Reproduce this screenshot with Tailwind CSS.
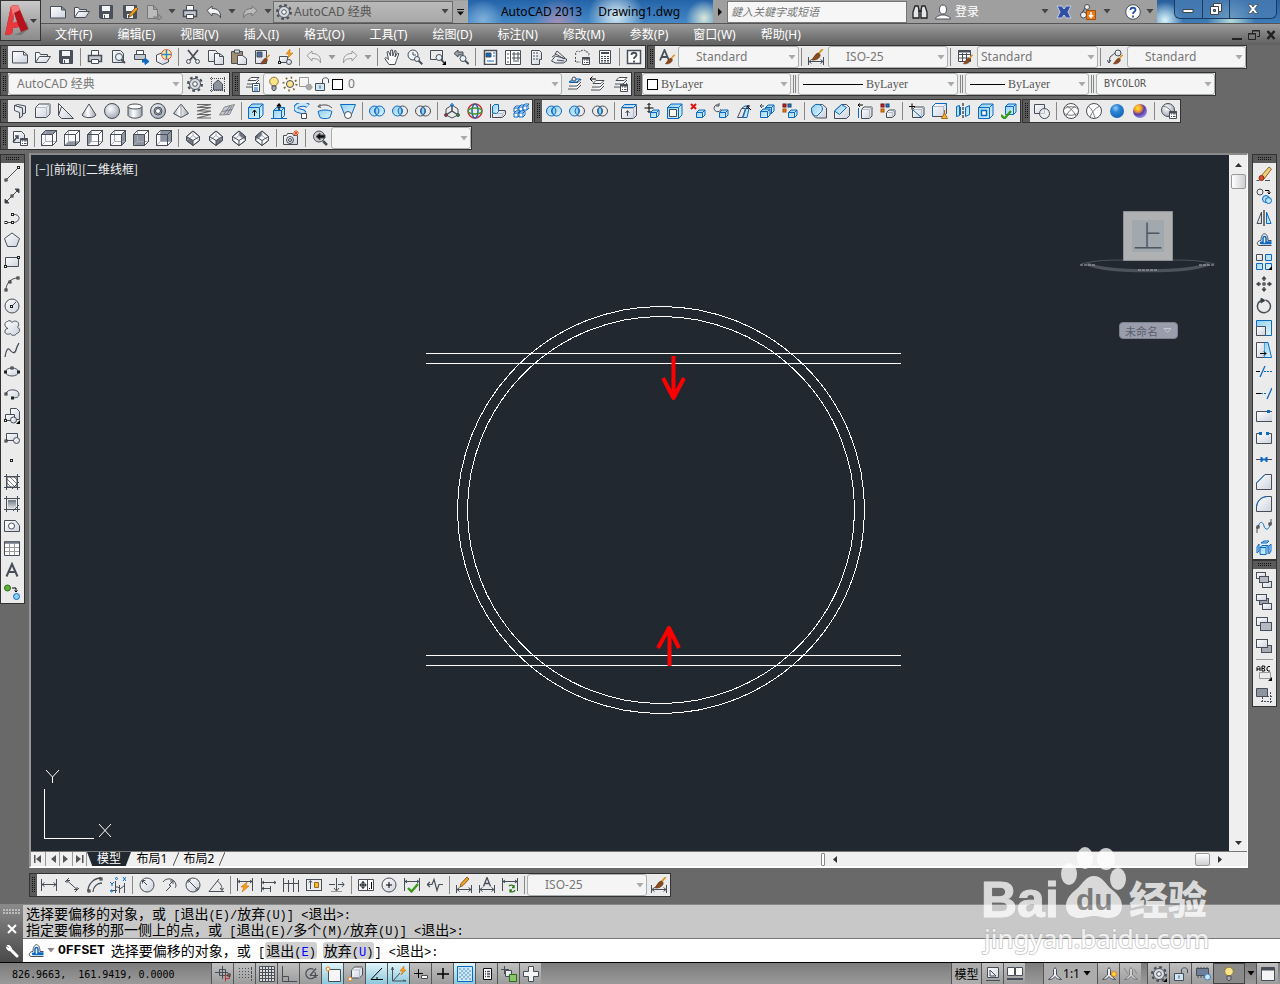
<!DOCTYPE html>
<html lang="zh-CN">
<head>
<meta charset="utf-8">
<title>AutoCAD 2013 Drawing1.dwg</title>
<script src="https://cdn.jsdelivr.net/npm/@tailwindcss/browser@4"></script>
</head>
<body class="relative flex h-screen min-h-[700px] flex-col overflow-hidden bg-[#696969] font-['Noto_Sans','Noto_Sans_CJK_SC',sans-serif] text-[12px] leading-4 text-black">

<svg class="absolute h-0 w-0" aria-hidden="true">
  <defs>
    <linearGradient id="g" x1="0" y1="0" x2="1" y2="1"><stop offset="0" stop-color="#fff"/><stop offset="1" stop-color="#cdd2de"/></linearGradient>
    <linearGradient id="b" x1="0" y1="0" x2="1" y2="1"><stop offset="0" stop-color="#8fd0f0"/><stop offset="1" stop-color="#e3f4fc"/></linearGradient>
    <linearGradient id="k" x1="0" y1="0" x2="0" y2="1"><stop offset="0" stop-color="#6f7681"/><stop offset="1" stop-color="#e6e8ec"/></linearGradient>
    <linearGradient id="m" x1="0" y1="0" x2="1" y2="0"><stop offset="0" stop-color="#aab0bb"/><stop offset=".4" stop-color="#fff"/><stop offset="1" stop-color="#9ba2ae"/></linearGradient>
    <radialGradient id="s" cx=".4" cy=".35" r=".65"><stop offset="0" stop-color="#fff"/><stop offset="1" stop-color="#a4abb9"/></radialGradient>
    <radialGradient id="sb" cx=".4" cy=".3" r=".7"><stop offset="0" stop-color="#8fd0ff"/><stop offset=".4" stop-color="#2f86d6"/><stop offset="1" stop-color="#1765b4"/></radialGradient>
    <radialGradient id="so" cx=".35" cy=".3" r=".7"><stop offset="0" stop-color="#ffe83a"/><stop offset=".35" stop-color="#f39a2a"/><stop offset=".65" stop-color="#5a3ba8"/><stop offset="1" stop-color="#8a86e0"/></radialGradient>
  </defs>
</svg>

<header class="flex h-[45px] shrink-0">
  <button aria-label="应用程序菜单" class="flex h-[41px] w-[41px] shrink-0 items-center border border-[#333] bg-linear-to-b from-[#c9c9c9] to-[#8b8b8b]">
    <svg width="39" height="38" viewBox="0 0 39 38"><path d="M5 33C14 34 24 31 25 19l3 8-8 6z" fill="#777"/><path fill="#b5121b" fill-rule="evenodd" d="M4 33 10 4l7-1 10 24-7 3-2-5-6 1-1 6zM13 11l3 9-4 1z"/><path fill="#e8383d" d="M4 33 10 4l4-1-1 8-1 10 4-1 2 5-6 1-1 6z"/><path fill="#f0777a" d="m10 4 7-1 2 5-6 3-1 4z"/><path fill="#3a3f46" d="M29 17h7l-3.500 4z"/></svg>
  </button>
  <div class="flex min-w-0 flex-1 flex-col">
    <div class="flex h-[24px] items-center border-b border-[#555] bg-[#9f9f9f]">
      <div class="flex w-[232px] shrink-0 items-center pl-[5px]" data-tools="new open save saveas export v print undo v redo v" data-kind="q"></div>
      <div class="flex h-[22px] w-[180px] shrink-0 items-center border border-[#6d6d6d] bg-linear-to-b from-[#b9b9b9] to-[#a9a9a9] pl-[2px]">
        <span data-icon="gear"></span>
        <select aria-label="工作空间" class="min-w-0 flex-1 appearance-none pl-[2px] text-[12px] text-[#555] outline-none"><option>AutoCAD 经典</option></select>
        <span data-caret="dark"></span>
      </div>
      <button aria-label="自定义快速访问工具栏" class="flex h-[22px] w-[15px] shrink-0 items-center justify-center bg-[#a9a9a9]"><svg width="9" height="8"><path d="M1 1.500h7" stroke="#111"/><path d="M1 3.500h7l-3.500 4z" fill="#111"/></svg></button>
      <div class="flex h-full w-[245px] shrink-0 items-center justify-center gap-4 bg-[radial-gradient(circle_at_15px_20px,#7fb0d8,transparent_20px),radial-gradient(circle_at_90px_24px,#a58fb8,transparent_26px),radial-gradient(circle_at_148px_16px,#d5eaf2,transparent_28px),radial-gradient(circle_at_236px_18px,#dbe8d8,transparent_18px),linear-gradient(#2463a8,#4589c8)] text-[12px]">
        <span>AutoCAD 2013</span><span>Drawing1.dwg</span>
      </div>
      <button aria-label="展开搜索" class="flex h-[22px] w-[14px] shrink-0 items-center justify-center"><svg width="6" height="8"><path d="M1 0v8l4-4z" fill="#111"/></svg></button>
      <input aria-label="搜索" placeholder="鍵入关鍵字或短语" class="h-[22px] w-[180px] min-w-0 border border-[#777] bg-[#f6f6f6] px-[3px] text-[11px] italic outline-none placeholder:text-[#777]">
      <div class="flex flex-1 items-center">
        <button aria-label="查找" class="flex w-[25px] justify-center"><span data-icon="binoc"></span></button>
        <button class="flex items-center gap-[4px] pl-[3px] text-white"><span data-icon="person"></span>登录</button>
        <span class="flex-1"></span>
        <span data-caret="dark"></span>
        <button aria-label="Exchange" class="flex w-[24px] justify-center"><span data-icon="xch"></span></button>
        <button aria-label="Autodesk 360" class="flex w-[24px] justify-center"><span data-icon="a360"></span></button>
        <span data-caret="dark"></span>
        <button aria-label="帮助" class="ml-[9px] flex w-[20px] justify-center"><span data-icon="helpq"></span></button>
        <span data-caret="dark"></span>
      </div>
      <div class="flex h-full w-[123px] shrink-0 items-start bg-[radial-gradient(circle_at_8px_20px,#d8f4f8,transparent_18px),radial-gradient(circle_at_74px_20px,#b8dcd8,transparent_24px),linear-gradient(#2a5f9c,#3f7cb8)] pl-[17px]">
        <div class="flex h-[19px] w-[103px] overflow-hidden rounded-b-md border border-t-0 border-[#1b3c62] bg-[#4b80b6]/70">
          <button aria-label="最小化" class="flex flex-1 items-center justify-center border-r border-[#1b3c62]"><svg width="12" height="12"><path d="M1 6.500h10v3H1z" fill="#fff" stroke="#444"/></svg></button>
          <button aria-label="还原" class="flex flex-1 items-center justify-center border-r border-[#1b3c62]"><svg width="12" height="12" fill="#fff" stroke="#444"><path d="M3.500.5h8v8h-8z"/><path d="M.5 3.500h8v8h-8z"/><path d="M3.500 6.500h2v2h-2z" fill="#4b80b6"/></svg></button>
          <button aria-label="关闭" class="flex w-[46px] items-center justify-center"><svg width="12" height="12"><path d="M1 1.500h3l2 2.500 2-2.500h3L7.700 6l3.300 4.500H8L6 8l-2 2.500H1L4.300 6z" fill="#fff" stroke="#444" stroke-width=".7"/></svg></button>
        </div>
      </div>
    </div>
    <nav class="flex h-[21px] items-center justify-between bg-linear-to-b from-[#9c9c9c] to-[#606060] pl-[14px] text-white">
      <div class="flex gap-[25px]">
        <a href="#">文件(F)</a><a href="#">编辑(E)</a><a href="#">视图(V)</a><a href="#">插入(I)</a><a href="#">格式(O)</a><a href="#">工具(T)</a><a href="#">绘图(D)</a><a href="#">标注(N)</a><a href="#">修改(M)</a><a href="#">参数(P)</a><a href="#">窗口(W)</a><a href="#">帮助(H)</a>
      </div>
      <div class="flex gap-[6px] pr-[4px]">
        <button aria-label="最小化图形"><svg width="10" height="12"><path d="M0 10h10" stroke="#222" stroke-width="2"/></svg></button>
        <button aria-label="还原图形"><svg width="12" height="12" fill="none" stroke="#222"><path d="M4.500 4V1.500h7v6H9M4 2h8M.5 4.500h7v6h-7zM0 5h8"/></svg></button>
        <button aria-label="关闭图形"><svg width="10" height="12"><path d="m1.500 2 7 8m0-8-7 8" stroke="#222" stroke-width="2.500"/></svg></button>
      </div>
    </nav>
  </div>
</header>

<div class="flex shrink-0 flex-col gap-[3px]">
  <div class="flex gap-px">
    <div data-bar class="flex h-[24px] items-center border border-[#333] bg-[#ebebeb]" data-tools="new open save | print preview publish print3d | cut copy paste match block | undog v redog v | pan zoomrt zoomwin zoomprev | props dcenter palettes sheets markup calc | help"></div>
    <div data-bar class="flex h-[24px] items-center border border-[#333] bg-[#ebebeb]">
      <button aria-label="文字样式" class="flex w-[23px] justify-center"><span data-icon="abrush"></span></button>
      <div data-select="Standard" class="flex h-[22px] w-[121px] items-center rounded-[3px] border border-[#aab0b0] bg-[#f5f5f5] pl-[14px] text-[#777]"></div>
      <span class="mx-[2px] h-[18px] w-px bg-[#888]"></span>
      <button aria-label="标注样式" class="flex w-[24px] justify-center"><span data-icon="dimbrush"></span></button>
      <div data-select="ISO-25" class="flex h-[22px] w-[120px] items-center rounded-[3px] border border-[#aab0b0] bg-[#f5f5f5] pl-[14px] text-[#777]"></div>
      <span class="mx-[2px] h-[18px] w-px bg-[#888]"></span>
      <button aria-label="表格样式" class="flex w-[24px] justify-center"><span data-icon="tabbrush"></span></button>
      <div data-select="Standard" class="flex h-[22px] w-[121px] items-center rounded-[3px] border border-[#aab0b0] bg-[#f5f5f5] text-[#777]"></div>
      <span class="mx-[2px] h-[18px] w-px bg-[#888]"></span>
      <button aria-label="多重引线样式" class="flex w-[24px] justify-center"><span data-icon="leadbrush"></span></button>
      <div data-select="Standard" class="flex h-[22px] w-[119px] items-center rounded-[3px] border border-[#aab0b0] bg-[#f5f5f5] pl-[14px] text-[#777]"></div>
    </div>
  </div>
  <div class="flex gap-[2px]">
    <div data-bar class="flex h-[24px] items-center border border-[#333] bg-[#ebebeb]">
      <div data-select="AutoCAD 经典" class="flex h-[22px] w-[175px] items-center rounded-[3px] border border-[#aab0b0] bg-[#f5f5f5] pl-[5px] text-[#777]"></div>
      <div class="flex" data-tools="gear wssave"></div>
    </div>
    <div data-bar class="flex h-[24px] items-center border border-[#333] bg-[#ebebeb]">
      <div class="flex" data-tools="layerprops"></div>
      <div data-select="0" class="flex h-[22px] w-[299px] items-center rounded-[3px] border border-[#aab0b0] bg-[#f5f5f5] pl-[2px] text-[#777]"><span data-icon="bulb"></span><span data-icon="sun"></span><span data-icon="vpfreeze"></span><span data-icon="unlock"></span><span class="mx-[2px] h-[11px] w-[11px] border border-black bg-white"></span></div>
      <div class="flex" data-tools="laycur layprev laystate"></div>
    </div>
    <div data-bar class="flex h-[24px] items-center border border-[#333] bg-[#ebebeb] font-['Liberation_Serif',serif]">
      <div data-select="ByLayer" class="flex h-[22px] w-[149px] items-center rounded-[3px] border border-[#aab0b0] bg-[#f5f5f5] pl-[4px] text-[#555]"><span class="h-[11px] w-[11px] border border-black bg-white"></span></div>
      <span class="mx-[2px] h-[18px] w-[3px] border-x border-[#888]"></span>
      <div data-select="ByLayer" class="flex h-[22px] w-[160px] items-center rounded-[3px] border border-[#aab0b0] bg-[#f5f5f5] pl-[4px] text-[#555]"><span class="h-px w-[60px] bg-black"></span></div>
      <span class="mx-[2px] h-[18px] w-[3px] border-x border-[#888]"></span>
      <div data-select="ByLayer" class="flex h-[22px] w-[124px] items-center rounded-[3px] border border-[#aab0b0] bg-[#f5f5f5] pl-[4px] text-[#555]"><span class="h-px w-[35px] bg-black"></span></div>
      <span class="mx-[2px] h-[18px] w-[3px] border-x border-[#888]"></span>
      <div data-select="BYCOLOR" class="flex h-[22px] w-[119px] items-center rounded-[3px] border border-[#aab0b0] bg-[#f5f5f5] pl-[4px] font-['DejaVu_Sans_Mono',monospace] text-[10px] text-[#555]"></div>
    </div>
  </div>
  <div class="flex gap-px">
    <div data-bar class="flex h-[24px] items-center border border-[#333] bg-[#ebebeb]" data-tools="polysolid box wedge cone sphere cylinder torus pyramid helix planar | extrude presspull sweep revolve loft | union subtract intersect | move3d rotate3d align3d array3d"></div>
    <div data-bar class="flex h-[24px] items-center border border-[#333] bg-[#ebebeb]" data-tools="union subtract intersect | exface mvface offface delface rotface tapface cpface colface | filedge chedge cpedge coledge | imprint clean separate shell check"></div>
    <div data-bar class="flex h-[24px] items-center border border-[#333] bg-[#ebebeb]" data-tools="wire2d | wire3d hidden realistic conceptual | vsman"></div>
  </div>
  <div class="flex">
    <div data-bar class="flex h-[24px] items-center border border-[#333] bg-[#ebebeb]">
      <div class="flex" data-tools="views | vtop vbottom vleft vright vfront vback | isosw isose isone isonw | camera | prevview"></div>
      <div data-select="" class="flex h-[22px] w-[140px] items-center rounded-[3px] border border-[#aab0b0] bg-[#f5f5f5]"></div>
    </div>
  </div>
</div>

<main class="flex min-h-0 flex-1 pt-[3px]">
  <div class="w-[29px] shrink-0 pt-px">
    <div data-vbar class="flex w-[25px] flex-col border border-[#333] bg-[#ebebeb]" data-kind="v" data-tools="line xline pline polygon rect arc circle cloud spline ellipse ellarc insert mkblock point hatch gradient region table mtext addsel"></div>
  </div>

  <div class="flex min-w-0 flex-1 flex-col">
    <section class="flex min-h-0 flex-1 flex-col border-2 border-r border-b-white border-l-[#959595] border-r-white border-t-[#8a8a8a]">
      <div class="flex min-h-0 flex-1">
        <div class="relative min-w-0 flex-1 overflow-hidden bg-[#212830]">
          <svg class="absolute inset-0 h-full w-full" fill="none" stroke="#fff" shape-rendering="crispEdges">
            <circle cx="630" cy="355" r="203.500"/><circle cx="630" cy="355" r="193.500"/>
            <path d="M395 198.500h475M395 208.500h475M395 500.500h475M395 510.500h475"/>
            <path d="M642.500 201v42M632 223l10.500 20L653 223M638.500 511v-36M627 493l11-20 10 20" stroke="#f00" stroke-width="4" shape-rendering="auto" stroke-linejoin="round"/>
          </svg>
          <div class="absolute left-[4px] top-[6px] font-['Noto_Sans_CJK_SC',sans-serif] text-[12px] text-[#f0f0f0]">[−][前视][二维线框]</div>
          <svg class="absolute bottom-[10px] left-[12px]" width="74" height="72" fill="none" stroke="#fff"><path d="M1.500 20v50M1 69.500h50" shape-rendering="crispEdges"/><path d="m3 1 6.500 7L16 1M9.500 8v6M56 55l12 13M68 55 56 68"/></svg>
          <svg class="absolute right-[12px] top-[56px]" width="138" height="64"><path d="M8 53C30 62 108 62 130 53" fill="none" stroke="#4c535c" stroke-width="3"/><path d="M2 53c15-4 30-4 44-4M92 49c14 0 29 0 44 4" fill="none" stroke="#4c535c"/><path d="M1 54h16M120 54h16M59 59h20" stroke="#a9adb2" stroke-dasharray="3 1"/><path d="M44.500.5h49v49h-49z" fill="#b0b1b3" stroke="#8f9194"/><path d="M53 9h32v32H53z" fill="#a1a9af"/><text x="54" y="36" font-size="30" fill="#4e5863" font-weight="300" font-family="Noto Sans CJK SC">上</text></svg>
          <button class="absolute right-[51px] top-[167px] flex h-[17px] w-[59px] items-center justify-center gap-[5px] rounded-[4px] border border-[#7d8190] bg-[#9a9eac] font-['Noto_Sans_CJK_SC',sans-serif] text-[11px] text-[#5a5f6e]">未命名<svg width="9" height="7" fill="none" stroke="#c5c8d2"><path d="M1 1.500h7l-3.500 4z"/></svg></button>
        </div>
        <div class="flex w-[18px] shrink-0 flex-col items-center justify-between bg-[#efefef]">
          <div class="flex flex-col items-center"><button aria-label="向上滚动" class="flex h-[19px] w-[17px] items-center justify-center"><svg width="7" height="4"><path d="M0 4h7L3.500 0z" fill="#333"/></svg></button><span class="h-[15px] w-[15px] rounded-[2px] border border-[#999] bg-linear-to-r from-white to-[#cfcfd4]"></span></div>
          <button aria-label="向下滚动" class="flex h-[17px] w-[17px] items-center justify-center"><svg width="7" height="4"><path d="M0 0h7L3.500 4z" fill="#333"/></svg></button>
        </div>
      </div>
      <div class="flex h-[15px] shrink-0 items-stretch border-t border-[#777] bg-[#f0f0f0]">
        <div class="flex">
          <button aria-label="第一个" class="w-[15px] border-r border-[#999]"><svg width="14" height="14" fill="#555"><path d="M3 3h1.500v8H3zM10 3v8L5 7z"/></svg></button>
          <button aria-label="上一个" class="w-[14px] border-r border-[#999]"><svg width="13" height="14" fill="#555"><path d="M10 3v8L5 7z"/></svg></button>
          <button aria-label="下一个" class="w-[13px] border-r border-[#999]"><svg width="12" height="14" fill="#555"><path d="M3 3v8l5-4z"/></svg></button>
          <button aria-label="最后一个" class="w-[14px] border-r border-[#999]"><svg width="13" height="14" fill="#555"><path d="M3 3v8l5-4zM9 3h1.500v8H9z"/></svg></button>
        </div>
        <button class="flex w-[44px] items-center justify-center bg-[#212830] text-[12px] text-white [clip-path:polygon(0_0,100%_0,88%_100%,12%_100%)]">模型</button>
        <button class="flex h-[14px] w-[42px] items-center justify-center">布局1</button>
        <svg width="6" height="14"><path d="M0 14 6 0" stroke="#555"/></svg>
        <button class="flex h-[14px] w-[40px] items-center justify-center">布局2</button>
        <svg width="6" height="14"><path d="M0 14 6 0" stroke="#555"/></svg>
        <div class="flex-1"></div>
        <div class="flex w-[426px] shrink-0 items-center">
          <span class="h-[13px] w-[4px] rounded-[1px] border border-[#888] bg-white"></span>
          <button aria-label="向左滚动" class="flex w-[20px] justify-center"><svg width="4" height="7"><path d="M4 0v7L0 3.500z" fill="#333"/></svg></button>
          <span class="flex-1"></span>
          <span class="h-[13px] w-[15px] rounded-[2px] border border-[#999] bg-linear-to-b from-white to-[#cfcfd4]"></span>
          <button aria-label="向右滚动" class="mr-[17px] flex w-[20px] justify-center"><svg width="4" height="7"><path d="M0 0v7l4-3.500z" fill="#333"/></svg></button>
        </div>
      </div>
    </section>
    <div class="flex shrink-0 pb-[7px] pt-[5px]">
      <div data-bar class="flex h-[24px] items-center border border-[#333] bg-[#ebebeb]">
        <div class="flex" data-tools="dlin dali darc dord | drad djog ddia dang | quick dbase dcont dspace dbreak | tol center inspect jogline | dedit dtedit dupd |"></div>
        <div data-select="ISO-25" class="flex h-[22px] w-[120px] items-center rounded-[3px] border border-[#aab0b0] bg-[#f5f5f5] pl-[14px] text-[#777]"></div>
        <div class="flex" data-tools="dimbrush"></div>
      </div>
    </div>
  </div>

  <div class="flex w-[32px] shrink-0 flex-col pl-[4px] pt-px">
    <div data-vbar class="flex w-[25px] flex-col border border-[#333] bg-[#ebebeb]" data-kind="v" data-tools="erase copyobj mirror offset array move rotate scale stretch trim extend breakpt break join chamfer fillet blend explode"></div>
    <div data-vbar class="flex w-[25px] flex-col border border-[#333] bg-[#ebebeb]" data-kind="v" data-tools="front back above under | abcfront hatchback"></div>
  </div>
</main>

<section class="flex h-[58px] shrink-0 border-t border-[#888] font-['Noto_Sans_CJK_SC',sans-serif] text-[12px]">
  <div class="flex w-[23px] shrink-0 flex-col items-center justify-between bg-linear-to-b from-[#8a8a8a] to-[#4a4a4a] py-[4px]">
    <svg width="18" height="5"><path d="M0 1h18M0 4h18" stroke="#bbb" stroke-width="2" stroke-dasharray="2 1"/></svg>
    <button aria-label="关闭命令行"><svg width="10" height="10"><path d="m1 1 8 8m0-8L1 9" stroke="#fff" stroke-width="2"/></svg></button>
    <button aria-label="自定义"><svg width="14" height="14"><path d="m5 5 7 7" stroke="#fff" stroke-width="3" stroke-linecap="round"/><path d="M2 1.500 4.500 4 4 5 1.500 3A3.500 3.500 0 0 0 6 6.500 3.500 3.500 0 0 0 2 1.500z" fill="#fff" stroke="#fff"/></svg></button>
  </div>
  <div class="flex min-w-0 flex-1 flex-col">
    <div class="h-[34px] border-b border-[#777] bg-[#c8c8c8] pl-[3px] text-[14px] leading-[16px]">
      <p class="h-[16px] whitespace-pre" data-cmd>选择要偏移的对象，或 [退出(E)/放弃(U)] &lt;退出&gt;:</p>
      <p class="h-[16px] whitespace-pre" data-cmd>指定要偏移的那一侧上的点，或 [退出(E)/多个(M)/放弃(U)] &lt;退出&gt;:</p>
    </div>
    <div class="flex flex-1 items-center bg-white pl-[5px] text-[14px] leading-[16px]">
      <span data-icon="offset"></span>
      <span data-caret="gray"></span>
      <b class="mr-[6px] font-['Liberation_Mono',monospace] text-[13px]">OFFSET</b>
      <span data-cmd>选择要偏移的对象，或 [</span>
      <button class="rounded-[3px] bg-[#d0d0d0] px-px" data-cmd>退出(<span class="text-[#00f]">E</span>)</button>
      <button class="ml-[6px] rounded-[3px] bg-[#d0d0d0] px-px" data-cmd>放弃(<span class="text-[#00f]">U</span>)</button>
      <span class="whitespace-pre" data-cmd>] &lt;退出&gt;:</span>
      <input aria-label="命令行" class="min-w-0 flex-1 outline-none">
    </div>
  </div>
</section>

<footer class="flex h-[22px] shrink-0 border-t border-black bg-linear-to-b from-[#7c7c7c] to-[#9a9a9a] pr-[2px]">
  <div class="flex w-[211px] shrink-0 items-center whitespace-pre pl-[12px] pt-[3px] font-['DejaVu_Sans_Mono',monospace] text-[10px]">826.9663,  161.9419, 0.0000</div>
  <div class="flex" data-kind="s" data-tools="infer snap grid ortho polar osnap* osnap3d otrack* ducs* dyn lwt tpy* qp sc annomon"></div>
  <div class="flex-1"></div>
  <button class="w-[30px] border-l border-[#555] bg-[#acacac] pt-[3px] text-[12px]">模型</button>
  <div class="flex" data-kind="s" data-tools="layoutq viewsq"></div>
  <div class="w-[18px]"></div>
  <button class="flex w-[54px] items-center justify-center border-l border-[#555] bg-[#acacac] text-[12px]"><span data-icon="anno"></span>1:1<span data-caret="black"></span></button>
  <div class="flex" data-kind="s" data-tools="annovis annoauto"></div>
  <div class="w-[6px]"></div>
  <div class="flex" data-kind="s" data-tools="wsgear unlock hw"></div>
  <button aria-label="隔离对象" class="flex w-[32px] items-center justify-center border border-[#444] bg-[#8a8a8a]"><span data-icon="bulb"></span></button>
  <button aria-label="状态栏菜单" class="flex w-[11px] items-center justify-center"><span data-caret="black"></span></button>
  <div class="flex" data-kind="s" data-tools="cleanscreen"></div>
</footer>

<svg class="pointer-events-none absolute bottom-[25px] right-[60px]" width="240" height="115" viewBox="980 845 240 115" fill="#fff" opacity=".75">
  <text x="981" y="918" font-family="Liberation Sans" font-weight="bold" font-size="50" stroke="#fff">Bai</text>
  <ellipse cx="1069" cy="875" rx="8" ry="11"/><ellipse cx="1085" cy="859" rx="8" ry="11"/><ellipse cx="1106" cy="860" rx="9" ry="11"/><ellipse cx="1118" cy="880" rx="8" ry="11"/>
  <path d="M1094 877c8 0 11 7 16 12 5 4 12 9 12 18 0 8-6 12-13 12-6 0-10-2-15-2s-9 2-15 2c-8 0-13-5-13-12 0-9 7-14 12-18 5-5 8-12 16-12z"/>
  <text x="1076" y="911" font-family="Liberation Sans" font-weight="bold" font-size="30" fill="#808080">du</text>
  <text x="1129" y="915" font-family="Noto Sans CJK SC" font-weight="900" font-size="39">经验</text>
  <text x="984" y="949" font-family="Noto Sans" font-size="26" stroke="#bdbdbd" stroke-width="2" stroke-linejoin="round" paint-order="stroke">jingyan.baidu.com</text>
</svg>

<script>
const K = '#484e58', B = '#0b69c4', O = '#e87a1c';
const p = (d, a = '') => `<path d="${d}" ${a}/>`;
const c = (x, y, r, a = '') => `<circle cx="${x}" cy="${y}" r="${r}" ${a}/>`;
const G = 'fill="url(#g)"', BL = `fill="url(#b)" stroke="${B}"`, SB = `stroke="${B}"`;
// extruded square: front face w*h at (x,y) with depth d
const cube = (x, y, w, h, d, a = G) => p(`M${x} ${y}l${d}-${d}h${w}v${h}l-${d} ${d}h-${w}zM${x} ${y}h${w}v${h}M${x + w} ${y}l${d}-${d}`, a);
// shaded box without inner edges
const soft = (x, y, w, h, d) => p(`M${x} ${y}l${d}-${d}h${w}v${h}l-${d} ${d}h-${w}z`, G) + p(`M${x} ${y}h${w}v${h}M${x + w} ${y}l${d}-${d}`, 'stroke="#b4bac6"');
const brush = p('M15 1l-5 6', `stroke="#d9962b" stroke-width="2.2"`) + p('M10 6c-3 0-4 3-8 8 5 1 10-2 10-6z', 'fill="#8a4a1e" stroke="#5a2d10" stroke-width=".7"');
const brush2 = `<g transform="translate(5 5) scale(.7)">${brush}</g>`;
const mag = (x, y, r = 3.5) => c(x, y, r, 'fill="#e8f2f8"') + p(`M${x + r * .7} ${y + r * .7}l3.500 3.500`, 'stroke-width="2"');
const node = (x, y) => `<rect x="${x - 1}" y="${y - 1}" width="2" height="2" fill="#fff" stroke="#222"/>`;
const pencil = p('M7 13l1-3.500L14 3l2 2-6 6.500z', 'fill="#f0a020" stroke="#7a4a10" stroke-width=".8"');
const disk = p('M1.500 1.500h13v13h-12l-1-1z', 'fill="#4a515b"') + p('M4 2h8v5H4zM5 10h6v4H5z', 'fill="#f2f4f8" stroke="none"') + p('M6.500 11v3');
const check = p('M4 11l3.500 3.500L14 7', 'stroke="#3a9a1a" stroke-width="2.400"');
const smallCube = cube(6.5, 9.5, 6, 5, 2.500, BL);
const tri = p('M16 16v-4l-4 4z', 'fill="#000" stroke="none"');
const dim = p('M.5 2v12M15.500 2v12M1 7.500h14M3.500 5.500L1 7.500l2.500 2M12.500 5.500L15 7.500l-2.500 2');
const dimTop = p('M.5 1v13M15.500 1v13M1 4.500h14M3 3L1 4.500 3 6M13 3l2 1.500L13 6');
const dimLow = p('M.5 8v8M15.500 8v8M1 12.500h14M3.500 10.500L1 12.500l2.500 2M12.500 10.500l2.500 2-2.500 2');
const undo = a => p('M1 6.500L6 2v2.500c6 0 9 3 8.500 9.500-1-3.500-3.500-4.500-8.500-4.500V12z', a);
const redo = a => `<g transform="translate(16 0) scale(-1 1)">${undo(a)}</g>`;
const ovl = p('M8 4.300a4.500 4.500 0 0 1 0 7.400 4.500 4.500 0 0 1 0-7.400z', `fill="#9ad4f2" stroke="${B}"`);
const vw = f => p('M.5 4.500l4-4h11v11l-4 4H.5z', 'fill="#fafafc"') + p(f, 'fill="#8d949f" stroke="none"') + p('M4.500.5v11h11M4.500 11.500l-4 4', 'stroke="#a9afba"') + p('M.5 4.500l4-4h11v11l-4 4H.5zM.5 4.500h11v11M11.500 4.500l4-4');
const iso = f => p('M8 1l6.500 5.500v4L8 15.500 1.500 10.500v-4z', 'fill="#fafafc"') + p(f, 'fill="#6f7681" stroke="none"') + p('M8 1v4.500M8 5.500L1.500 10.500M8 5.500l6.500 5', 'stroke="#a9afba"') + p('M8 1l6.500 5.500v4L8 15.500 1.500 10.500v-4zM1.500 6.500L8 10.500l6.500-4M8 10.500v5');
const gear = c(8, 8, 5.5, 'fill="#d9dce3"') + c(8, 8, 7, 'stroke-width="2" stroke-dasharray="2.750 2.750"') + c(8, 8, 2.3, 'fill="#fff"');
const layers = (y = 0) => p(`M4 ${y + 4.500}l3-3h8l-3 3zM3 ${y + 8}h8l4-4M2 ${y + 11}h9l4-4`, 'fill="#fff"');
const list = p('M8.500 8.500h7v7h-7zM10 11h1M12 11h2.500M10 13.500h1M12 13.500h2.500', 'fill="#fff"') + p('M8 9.500h8', 'stroke-width="2"');
const dots = `<rect x="1" y="1" width="3" height="3" fill="#c22" stroke="#711"/><rect x="6" y="1" width="3" height="3" fill="#357fd0" stroke="#147"/><rect x="1" y="6" width="3" height="3" fill="${O}" stroke="#a50"/>`;
const anno = p('M8 1.500l1.500 2V9l5 4.500-4-.5L8 10.500 5.500 13l-4 .5 5-4.500V3.500z', 'fill="#eef0f4"');
const lay2 = (a, b) => `<rect x=".5" y="1.500" width="11" height="8" ${a}/><rect x="4.500" y="6.500" width="11" height="8" ${b}/>`;

const ICONS = {
  new: p('M.5 2.500h11l4 3.500v8h-15zM11.500 2.500v3.500h4', G),
  open: p('M.5 13.500v-10h4l1 2h7v2', G) + p('M.5 13.500l4-6h11l-4 6z', G),
  save: disk, saveas: disk + pencil,
  export: p('M1.500 1.500h6l4 4v9h-10zM7.500 1.500v4h4', 'fill="#bbb" stroke="#777"') + p('M7 13h5v-3l4 3.500-4 3V14', 'fill="#999" stroke="#777"'),
  print: p('M4.500 6V1.500h7V6', 'fill="#fff"') + p('M1.500 6.500h13v6h-13z', 'fill="#c3c8d0" stroke-width="1.500"') + p('M4.500 10.500h7v4h-7z', 'fill="#fff"'),
  preview: p('M2.500 1.500h8l3 3v9h-11z', G) + mag(9, 8),
  publish: p('M3.500 5V1.500h7V5', 'fill="#fff"') + p('M1.500 5.500h11v5h-11z', 'fill="#c3c8d0"') + p('M9 11.500h3V9l4 3.500-4 3V13H9', `fill="${B}" stroke="${B}"`),
  print3d: p('M.5 6l5-2 7 2v7l-6 2.500-6-3z', G) + c(10.5, 5.500, 5, 'fill="#ffe9a0" stroke="#e53"') + p('M10.500 1v9M6 5.500h9', 'stroke="#2a8ad0" stroke-width="1.500"'),
  cut: p('M3 1l8 10M13 1L5 11', 'stroke-width="1.800"') + c(3.5, 12.5, 2) + c(12.5, 12.5, 2),
  copy: p('M.5 1.500h7l2 2v9h-9z', G) + p('M6.500 4.500h5l4 3v8h-9zM11.500 4.500v3h4', G),
  paste: p('M.5 2.500h11v12H.5z', 'fill="#a58d72"') + p('M3.500 1h5v3h-5z', 'fill="#ddd"') + p('M6.500 6.500h5l4 3v6h-9z', G),
  match: p('M1.500 1.500h11v13h-11z', G) + p('M3 3h5v5H3z', 'fill="#4b6f9c"') + brush2,
  block: p('M2.500 7.500h8v6h-8z', G) + node(2.5, 13.5) + c(12, 13, 2.500, G) + p('M13 0l-4 5h3l-1 4 5-5h-3z', 'fill="#f6a01a" stroke="#c60" stroke-width=".5"'),
  undo: undo('fill="#f2f2f2"'), redo: redo('fill="#bbb" stroke="#777"'),
  undog: undo('fill="#eee" stroke="#999"'), redog: redo('fill="#eee" stroke="#999"'),
  pan: p('M5 15.500L.8 9.500 2 8.500l2.500 2L3 3l1.500-.5L6.500 7 6.800 1h1.700l.3 6 2-5.500 1.400.5-1.200 6 2.500-4 1.300.7-2.500 7-1.300 3.800z', 'fill="#fff"'),
  zoomrt: c(6, 6, 5, 'fill="#eef4f8"') + p('M6 3v3h3') + mag(10, 10, 2.500),
  zoomwin: p('M.5 1.500h12v9H.5z') + mag(9, 8.5, 3) + tri,
  zoomprev: p('M1 4.500L5 1v2h5v3H5v2z', 'fill="#9aa0aa"') + mag(10, 9.5, 3),
  props: p('M2.500 1.500h12v14h-12z', 'fill="#fff" stroke-width="1.500"') + p('M4 4h5v4H4z', `fill="${B}"`) + p('M11 4h2M11 7h2M5 12h7', `stroke="${B}"`),
  dcenter: p('M.5 1.500h15v14H.5zM5.500 2v13', 'fill="#fff"') + p('M3 4v2M3 8v2M3 12v2M8 4h2v2H8zM12 4h2v2h-2zM8 8h2v2H8zM12 8h2v2h-2zM8 12h6'),
  palettes: p('M3.500 1.500h8l2 2v7h-2v5h-8z', G) + p('M5 4h5M5 7h5M5 10h5', 'stroke-dasharray="2 1"'),
  sheets: p('M.5 12l4-5 11 3v2l-3 2h-8z', G) + p('M1 8l4-3 8 5M4 5l2-3 8 7M6 11l7 1'),
  markup: p('M2 6c-2-3 2-5 4-3 2-3 6-2 6 0 3-1 4 3 2 4', 'stroke-dasharray="2 1"') + p('M1.500 8v5h5', 'stroke-dasharray="2 1"') + list,
  calc: p('M2.500 1.500h11v13h-11z', 'fill="#fff"') + p('M4 4h8', 'stroke-width="2"') + p('M4 7.500h8M4 9.500h8M4 11.500h8M4 13h8', 'stroke-dasharray="2 1"'),
  help: p('M1.500 1.500h13v13h-13z', 'fill="#fff" stroke-width="1.500"') + p('M5.500 6C5.500 3 10.500 3 10.500 6 10.500 8 8 7.500 8 10M8 11.500v2', 'stroke-width="1.800"'),
  abrush: p('M1 11.500L5.500 1l4.500 10.500M2.500 8h6', 'stroke-width="1.800"') + brush2,
  dimbrush: dimLow + `<g transform="translate(2 -1) scale(.85)">${brush}</g>`,
  tabbrush: p('M1.500 1.500h12v11h-12zM1 5.500h13M1 9h13M5.500 4v9M9.500 4v9', 'fill="#fff"') + p('M1 2.500h13', 'stroke-width="2"') + brush2,
  leadbrush: c(11, 4, 3, G) + p('M8 4L3 8l-1 6M0 11l2 3 2-3') + brush2,
  gear, wsgear: gear + tri,
  wssave: p('M1.500 1v15M14.500 1v15M0 2.500h16M0 14.500h16', 'stroke-dasharray="1 1"') + p('M3.500 8L8 4l4.500 4v6h-9z', 'fill="#8d949f"'),
  layerprops: layers() + p('M8.500 7.500h7v8h-7z', 'fill="#fff"') + p('M10 9.500h4M10 12h4M10 14h4', SB),
  bulb: c(8, 5.5, 4.3, 'fill="#fbe38a" stroke="#8b7a3a"') + p('M6 10h4v3l-1 1.500H7L6 13z', 'fill="#aab"'),
  sun: c(8, 8, 3.5, 'fill="#ffe68a"') + c(8, 8, 6.500, 'stroke="#806020" stroke-width="2" stroke-dasharray="1.500 3.600"'),
  vpfreeze: p('M1.500 1.500h9v9h-9z', 'stroke="#999"') + c(11, 11, 3, 'fill="#aaa" stroke="#999" stroke-dasharray="1.500 1"'),
  unlock: p('M1.500 7.500h9v7h-9z', 'fill="#cfe6f4"') + p('M8.500 7V4c0-3 6-3 6 0v3M6 9.500v3'),
  laycur: layers(2) + p('M3 6l4-3h7l-3 3z', BL) + c(8, 3, 2, G), layprev: layers(3) + p('M1 3h6M3.500.5L1 3l2.500 2.500', 'stroke="#000"'), laystate: layers() + list,
  polysolid: p('M2.500 2.500l3-1 8 1.500v7l-3 1V5z', G) + p('M2.500 2.500v5l5 2V15l3-2V5z', G),
  box: soft(.5, 4.5, 11, 10, 3.500), wedge: p('M.5.500v12l3 3h12z', G) + p('M.5 12.500l3-9'), cone: p('M8 1L1 12c2 3.500 12 3.500 14 0z', 'fill="url(#m)"'),
  sphere: c(8, 8, 7.500, 'fill="url(#s)"'), cylinder: p('M1 3.500v9c2 3.500 12 3.500 14 0v-9', 'fill="url(#m)"') + '<ellipse cx="8" cy="3.500" rx="7" ry="2.500" fill="#fff"/>',
  torus: c(8, 8, 7.500, 'fill="url(#s)"') + c(8, 8, 4, 'fill="#c0c5ce"') + c(8, 8, 2.5, 'fill="#fff"'), pyramid: p('M8 1L.5 10.500 8 14.500l7.500-4z', 'fill="url(#m)"') + p('M8 1v13', 'stroke="#999"'),
  helix: p('M1 1.500h14L1 4.500h14L1 8h14L1 11.500h14L1 15h14', 'stroke-width="1.200" stroke="#666"'), planar: p('M.5 12l5-8 10-2.500-5 10z', 'fill="#c5cad4" stroke="#888"') + p('M3.500 8.500l9.500-2M5 11l6-8M8 11l5-8', 'stroke-width=".6"'),
  extrude: cube(.5, 4.5, 11, 11, 3.500, BL) + p('M6.500 13V7.500M4.500 9.500l2-2.500 2 2.500', 'stroke="#000"'),
  presspull: p('M0 15.500h16', SB) + cube(2.5, 7.500, 8, 8, 3, BL) + p('M8 7V1M6 3.500L8 1l2 2.500', 'stroke="#000" stroke-width="1.300"'),
  sweep: p('M14 3C11 0 1 1 2 6c1 3 7 1 8 4', 'stroke-width="5" stroke="#0b69c4"') + p('M14 3C11 0 1 1 2 6c1 3 7 1 8 4', 'stroke-width="3" stroke="#c8e8f8"') + p('M7.500 10.500h5v5h-5z', 'fill="#fff"'),
  revolve: p('M1 4c4-3 10-3 14 1M3.500 1L1 3.500l3 1') + p('M1 8.500c4-2 10-2 14 0l-2 6c-3 1.500-7 1.500-10 0z', BL), loft: p('M.5 1.500h15l-4 10h-7z', BL) + c(8, 12, 3.5, 'fill="#fff"'),
  union: c(5.5, 8, 5, BL) + c(10.5, 8, 5, BL) + ovl, subtract: c(10.5, 8, 5) + c(5.5, 8, 5, BL) + ovl, intersect: c(5.5, 8, 5) + c(10.5, 8, 5) + ovl,
  move3d: p('M8 8V2M8 8l-6 4M8 8l6 4', 'stroke-width="1.500"') + p('M2 6l6-4 6 4v6l-6 3-6-3z') + c(8, 2, 1.3, SB) + c(2, 12, 1.5, 'fill="#c22"') + c(14, 12, 1.5, 'fill="#2a2"'),
  rotate3d: c(8, 8, 7, 'stroke="#c33" stroke-width="1.500"') + '<ellipse cx="8" cy="8" rx="3" ry="7" stroke="#2a5fb0" stroke-width="1.500"/><ellipse cx="8" cy="8" rx="7" ry="3" stroke="#3a9a3a" stroke-width="1.500"/>',
  align3d: soft(2.5, 10.500, 10, 4, 3) + p('M2.500 10V3.500l2-2h4v7l-2 2z', BL) + p('M.5 1v14'),
  array3d: [[0, 5], [5, 4], [0, 10], [5, 10], [9, 3]].map(a => cube(a[0] + 1, a[1], 4, 4, 2, `fill="#fff" ${SB}`)).join(''),
  exface: soft(.5, 5.5, 12, 10, 3) + p('M.5 4.500l3-3h12l-3 3z', BL) + p('M6.500 13V8M4.500 10l2-2.500 2 2.500'),
  mvface: smallCube + p('M5 .5v9M.5 5h9M3.500 2L5 .5 6.500 2M3.500 8L5 9.500 6.500 8', 'stroke="#000"'), offface: cube(.5, 4.5, 11, 11, 3.500, BL) + p('M2.500 6.500h7v7h-7z', 'fill="#fff"'),
  delface: smallCube + p('M1 1l5 5M6 1L1 6', 'stroke="#d11" stroke-width="2"'), rotface: smallCube + p('M6 2a3.500 3.500 0 1 0 2 4M6 0v3H3'),
  tapface: p('M1.500 14.500l4-9h4l-3 9z', G) + p('M7 14.500l3-9h3l-2 9zM6 5l3-2h4', BL) + p('M11 3l4 4M11 6V3h3', 'stroke="#000"'), cpface: cube(6.5, 4.5, 6, 6, 2.500, BL) + cube(1.5, 8.500, 7, 6, 2.500, BL) + p('M1 3h4M3 1L1 3l2 2'), colface: dots + smallCube,
  filedge: p('M.5 5l4-3.500h7l4 3.500v10h-8c-5 0-7-4-7-10z', G) + p('M.5 5l4-3.500c7-1 8 4 6 7L6 13c-4 0-5.500-3-5.500-8z', BL), chedge: p('M.5 8l7-6.500h5l3 3v8l-3 3H.5z', G) + p('M.5 8l7-6.500 5 3-7 7z', BL),
  cpedge: soft(4.500, 6.5, 8, 9, 2.5) + p('M1.500 5v10', SB) + p('M1 2h5M3 .5L1 2l2 2', 'stroke="#000"'), coledge: dots + soft(6.500, 9.5, 6, 5, 2.500),
  imprint: soft(3.5, 6.5, 9, 8, 2.5) + p('M4 7l9 8', SB) + p('M0 3.500h6M3 .5v6', 'stroke="#000"'), clean: soft(.5, 3.5, 11, 10, 3) + p('M.5 13.500v-10l3-3h11v5', SB) + p('M12.500 7v3l-3 5.500h6l-3-5.500', 'fill="#f5b53a" stroke="#a86a10"'),
  separate: p('M1.500 3.500l3-1v10l-3 1zM5.500 4v8', BL) + p('M10.500 4.500l4-2v9l-4 2z', BL) + p('M8 0v16', 'stroke="#000" stroke-dasharray="3 1"'), shell: cube(.5, 4.5, 11, 11, 3.500, BL) + p('M3.500 7.500h5v5h-5z', 'fill="#fff" stroke="#0b69c4" stroke-width="1.500"'), check: cube(4.500, 3.5, 8, 8, 2.500, BL) + `<g transform="translate(-4 1)">${check}</g>`,
  wire2d: p('M.5 1.500h10v9H.5z', G) + c(10.5, 10.500, 5, 'fill="#f0f1f4" fill-opacity=".7"'),
  wire3d: c(8, 8, 7.500, 'fill="#fff"') + p('M3 2.500c4 2 8 6 10 10.500M13 2.500C9 5 5 9 3 13M1 6c4-3 10-3 14 0M1 10c4 3 10 3 14 0', 'stroke="#777"'), hidden: c(8, 8, 7.500, 'fill="#fff"') + p('M2 3c3 2 5 5 7 12M14 3C9 5 6 9 4 14', 'stroke="#777"'),
  realistic: c(8, 8, 7, 'fill="url(#sb)" stroke="none"'), conceptual: c(8, 8, 7, 'fill="url(#so)" stroke="none"'), vsman: c(7, 7, 6.500, 'fill="url(#s)"') + p('M2 3c5 1 8 4 10 8', 'stroke="#777"') + list,
  views: p('M1.500 1.500h8l3 3v8h-11z', G) + p('M1 12l5-6M3 6h3v3', 'stroke-width="1.500"') + list,
  vtop: vw('M.5 4.500l4-4h11l-4 4z'), vbottom: vw('M.5 15.500l4-4h11l-4 4z'), vleft: vw('M.5 4.500l4-4v11l-4 4z'), vright: vw('M11.500 4.500l4-4v11l-4 4z'), vfront: vw('M.5 4.500h11v11H.5z'), vback: vw('M4.500.5h11v11h-11z'),
  isosw: iso('M1.500 6.500L8 10.500v5l-6.500-5z'), isose: iso('M14.500 6.500L8 10.500v5l6.500-5z'), isone: iso('M8 1l6.500 5.500v3L8 5.500z'), isonw: iso('M8 1L1.500 6.500v3L8 5.500z'),
  camera: p('M.5 5.500h3l1-2h5l1 2h4v9H.5z', G) + c(7, 10, 3.500, G) + c(7, 10, 1.500) + p('M13 0v6M10 3h6M11 1l4 4M15 1l-4 4', 'stroke="#e8501c"'),
  prevview: c(7, 6.5, 5.5, 'fill="#ccc"') + p('M4 6.500L8 3v2h5v3H8v2z', 'fill="#111"') + p('M11 11l4 4', 'stroke-width="2.500"'),
  line: p('M2 14L14 2') + node(2, 14) + node(14.5, 1.5), xline: p('M1 15L15 1') + p('M1 11v4h4zM15 5V1h-4z', 'fill="#333"') + node(8, 8), pline: p('M2 12.500h7M9 4.500c8-1 8 8 0 8') + node(2, 12.5) + node(8.5, 12.5) + node(8.5, 4.5),
  polygon: p('M8 1L15.500 6.500 12.500 14.500h-9L.5 6.500z', G), rect: p('M1.500 3.500h13v9h-13z', G) + node(1.5, 12.5) + node(14.5, 3.5), arc: p('M2 14C2 7 7 2 14 2') + node(2, 14) + node(6, 6) + node(14, 2),
  circle: c(8, 8, 7, G) + p('M8 8l4-4') + node(7.5, 8.5), cloud: p('M4 8.500C0 7 0 2 3.500 1.500 5 0 7 .5 8 2.500c1-2 6-2 6.500 1 .5 2 0 3-1 3.500 3 2 2.500 6-1 6.500-1 2.500-5 2.500-6 0-2 1.500-6 .5-5.500-2 0-2 1-3 3-3z', G), spline: p('M1 15C2 8 4 5 6 8s5 4 6 0 2-5 3-7', 'stroke-width="1.300"'),
  ellipse: '<ellipse cx="8" cy="8" rx="6.500" ry="4" fill="url(#g)"/>' + node(1.5, 8) + node(14.5, 8) + node(8, 4), ellarc: p('M2 8c1-6 13-5 13 0 0 4-4 4-6 3.500', G) + node(2, 8) + node(8.5, 12),
  insert: p('M6.500 .5h6l3 3v8h-9z', G) + p('M1.500 6.500h9v6h-9z', G) + c(9.5, 12, 3, G) + node(1.5, 12.5) + tri, mkblock: p('M2.500 3.500h11v7h-11z', G) + node(2, 11) + c(12.5, 10.5, 3, G), point: node(7.5, 8.5),
  hatch: p('M3 3h10v10H3z', 'fill="#fff"') + p('M2.500 0v16M13.500 0v16M0 2.500h16M0 13.500h16') + p('M3 5l8 8M3 9l4 4M6 3l7 7M10 3l3 3', 'stroke-width=".7"') + p('M15 8l-7 7'), gradient: p('M4 4h8v9H4z', 'fill="url(#k)" stroke="none"') + p('M2.500 0v16M13.500 0v16M0 2.500h16M0 13.500h16M15 9l-6 6'),
  region: p('M.5 2.500h11l4 5v6H.5z', G) + c(7.5, 8, 3, 'fill="#fff"'), table: p('M.5 1.500h15v14H.5z', 'fill="#fff"') + p('M1 2.500h14', 'stroke="#6d7582" stroke-width="2.500"') + p('M1 7.500h14M1 11.500h14M5.500 4v11M10.500 4v11', 'stroke="#999"'), mtext: p('M2.500 14.500L8 2l5.500 12.500M4.500 10h7', 'stroke-width="2"'),
  addsel: c(3.5, 4, 3, 'fill="#5fae3a" stroke="#2c6d17"') + c(12.5, 12.5, 3, 'fill="#8fd0f5" stroke="#0b69c4"') + p('M8 4h4v4M10.500 6.500L12 8l1.500-1.500', 'stroke="#000"'),
  erase: p('M.5 14.500h3M9 14.500h5') + p('M5 10L13 1l2.500 2L8 13z', 'fill="#f2cf7a" stroke="#8b6a20"') + c(5.5, 12, 2.500, 'fill="#d8502a" stroke="#8b2a10"'),
  copyobj: c(4, 4, 3) + p('M9 2.500h4v3M11.500 4.500L13 6l1.500-1.500', 'stroke="#000"') + c(10, 11, 3.500, BL) + c(12.5, 12.500, 3, BL), mirror: p('M5.500 2v11.500H1z', G) + p('M10.500 2v11.500H15z', BL) + p('M8 0v16', 'stroke="#000"'),
  offset: p('M15.500 13.500H3c-3-1-2-5 2-5 0-9 7-9 7 0h3.500') + p('M15.500 11.500H5c-1-1 0-1.500 2-1.500V6c0-2 3-2 3 0v4h5.500', 'stroke="#0b69c4" stroke-width="1.500"'),
  array: p('M.5.5h6v6h-6z', G) + p('M9.500.5h6v6h-6zM.5 9.500h6v6h-6zM9.500 9.500h6v6h-6z', BL) + tri, move: node(8, 8) + p('M8 5V1M8 11v4M5 8H1M11 8h4', 'stroke-width="1.500"') + p('M6 3l2-2.500L10 3zM6 13l2 2.500 2-2.500zM3 6L.5 8 3 10zM13 6l2.500 2-2.500 2z', 'fill="#333"'),
  rotate: p('M9.500 2A6.500 6.500 0 1 1 5 2.500', 'stroke-width="1.500"') + p('M5 0v5l4-2.500z', 'fill="#333"'), scale: p('M.5.5h15v15H.5z', BL) + p('M.5 6.500h9v9h-9z', G), stretch: p('M8 .5L12 .5l3.500 15H8z', BL) + p('M8 .5H.5v15H8', G) + p('M4 11.500h6M8 9.500l2 2-2 2', 'stroke="#000"'),
  trim: p('M0 7.500h4', 'stroke="#000"') + p('M8 7.500h8', 'stroke="#0b69c4" stroke-dasharray="2 1"') + p('M4 13L9 2', 'stroke="#0b69c4" stroke-width="1.300"'), extend: p('M0 7.500h5', 'stroke="#000"') + p('M5 7.500h6', 'stroke="#0b69c4" stroke-dasharray="2 1"') + p('M11 13l5-11', 'stroke="#0b69c4" stroke-width="1.300"'),
  breakpt: p('M16 3.500H.5v10H16', G) + p('M11 2h3v3h-3z', 'fill="#0b69c4" stroke="none"'), break: p('M4 3.500H.5v10h15v-10H12', G) + p('M3 2h3v3H3zM10 2h3v3h-3z', 'fill="#0b69c4" stroke="none"'), join: p('M0 7.500h5M11 7.500h5') + p('M5 5v5l3-2.500zM11 5v5L8 7.500z', 'fill="#0b69c4" stroke="#0b69c4"'),
  chamfer: p('M9 .5h6.500v15H.5V9z', G) + p('M.5 9L9 .5', SB), fillet: p('M15 .5h.5v15H.5V11C1 5 5 1 11 .5z', G) + p('M.5 11C1 5 5 1 11 .5', SB), blend: p('M1 15V9M15 1v5') + p('M2 9c2-7 5-5 6-1s5 5 6-2', SB) + node(2, 9) + node(14, 6),
  explode: cube(4, 7.5, 6, 7, 2, BL) + p('M1 13V7l2-3v7zM5 3l3-2 5 0-2 2zM13 6l2-2v7l-2 3z', BL),
  front: `<rect x=".5" y=".5" width="9" height="6" ${G}/><rect x="6.500" y="9.500" width="9" height="6" ${G}/><rect x="3.500" y="4.500" width="9" height="6" fill="#b4b9c2"/>`, back: `<rect x="3.500" y="4.500" width="9" height="6" fill="#9ba1ac"/><rect x=".5" y=".5" width="10" height="6" ${G}/><rect x="6.500" y="9.500" width="9" height="6" ${G}/>`,
  above: lay2(G, 'fill="#b4b9c2"'), under: `<rect x="5.500" y="7.500" width="10" height="7" fill="#a4a9b2"/><rect x=".5" y="1.500" width="11" height="8" ${G}/>`,
  abcfront: p('M3.500 7.500h11v6h-11z', 'stroke="#999"') + p('M1 6V2.500L2.500 1 4 2.500V6M1 4h3M6 1v5h2.500L9 5 8 3.500 9 2 8.500 1zM6 3.500h2M14 1.500h-2L11 3v2l1 1h2', 'stroke="#000"') + tri, hatchback: p('M6.500 7v9M14.500 5v11M5 9.500h11M5 14.500h11', 'stroke-dasharray="2 1"') + p('M.5 1.500h11v8H.5z', 'fill="#8d949f"'),
  dlin: dim, dali: p('M1 5l4-4M11 15l4-4M3 3.500l10 9M3 6V3.500h3M13 10v2.500h-3'), darc: p('M1 14C1 7 7 1 14 1M6 15c0-5 4-9 9-9', 'stroke-width="1.300"') + node(2, 14) + node(14, 2), dord: p('M5.500 4v12M1 13.500h6M5 10l3 0 2 2 5-4M9.500 8v8M14.500 6v10') + p('M0 5l2 2 2-2M2 7v2M13 0l3 4M16 0l-3 4', SB) + c(6.5, 1.5, 1, SB) + c(1.5, 14, 1, SB),
  drad: c(8, 8, 7, G) + p('M8 8L3.500 3.500M3.500 6.500v-3h3'), djog: p('M1 5c3-5 12-4 13 3 0 2-1 3-1 3M4 14l5-5-2-1 4-4M8 4h3v3'), ddia: c(8, 8, 7, G) + p('M3 3l10 10M3 6V3h3M13 10v3h-3'), dang: p('M1 14.500h15M1 14.500L11 2M9 4c4 2 5 6 5 9M12 11l2 2.500 1.500-2.500'),
  quick: dimTop + p('M10 5l-6 5h3l-2 5 7-6H9z', 'fill="#f6a01a" stroke="#c60" stroke-width=".6"'), dbase: p('M1.500 1v14M2 5.500h14M2 11.500h8M10.500 9v6M4 4L2 5.500 4 7M4 10l-2 1.500L4 13M14 4l2 1.500L14 7'), dcont: p('M.5 1v14M5.500 3v12M10.500 1v14M15.500 3v12M0 6.500h16'), dspace: p('M.5 2v12M15.500 2v12M0 2.500h16M0 13.500h16M4.500 4v8M3 5.500l1.500-2L6 5.500') + p('M8.500 5.500h4v5h-4z', 'fill="#f6c01a" stroke="#963"'), dbreak: p('M7.500 1v12M5 11l2.500 3 2.500-3M0 7.500h6M9 7.500h6M13 5l2 2.500-2 2.500') + p('M2 14.500h11', 'stroke="#999"'),
  tol: p('M.5 2.500h15v11H.5zM9.500 2.500v11', 'fill="#fff"') + c(5, 8, 2.5) + p('M5 4v8M1.500 8h7M11 11.500h1M13.500 5v7', 'stroke="#000"'), center: c(8, 8, 7, G) + p('M8 5v6M5 8h6', 'stroke="#000"'), inspect: dimTop + check, jogline: p('M0 7.500h5l2-5 3 11 2-6h4M3 5L0 7.500 3 10', 'stroke-width="1.200"'),
  dedit: dimLow + `<g transform="translate(-3 -3)">${pencil}</g>`, dtedit: dimLow + p('M4.500 9.500L8 .5l3.500 9M5.500 6.500h5', 'stroke-width="1.300"'), dupd: dimTop + p('M7 9a3 3 0 0 1 5 1M12 8v2.500h-2M13 13a3 3 0 0 1-5 1M8 15.500V13h2', 'stroke="#2d7a1a" stroke-width="1.300"'),
  binoc: p('M3 2h3l1 4v8H1V8zM13 2h-3L9 6v8h6V8zM6 7h4', 'fill="#e4e6ea" stroke="#222" stroke-width="1.300"'), person: '<ellipse cx="8" cy="5.500" rx="3.500" ry="4.500" fill="#fff"/>' + p('M.5 15c0-3 4-3 5.500-4h4c1.500 1 5.500 1 5.500 4z', 'fill="#fff"'),
  xch: p('M1 2h5l2 3 2-3h5l-3 6 3 6h-5l-2-3-2 3H1l3-6z', 'fill="#2f4fa5" stroke="#c6cde7"'), a360: c(7, 3, 2.5, 'fill="#eee"') + c(3.5, 11, 3, 'fill="#eee"') + p('M5 4L2 9') + p('M6.500 6.500h9v9h-9z', `fill="${O}" stroke="#a84e08"`) + p('M11 8v5M9 11l2 2.500 2-2.500', 'stroke="#fff" stroke-width="1.500"'),
  helpq: c(8, 8, 7.300, 'fill="#fff"') + p('M5.500 6C5.500 3 10.500 3 10.500 6 10.500 8 8 7.500 8 10M8 11.500v2', 'stroke="#2452a8" stroke-width="1.800"'),
  infer: p('M7.500 0v13M0 6.500h13M4.500 3.500h6v6h-6z') + p('M10.500 15.500v-6h4v3h-4', 'stroke="#b33"') + node(14, 9), snap: p('M2 2.500h10M2 5.500h10M2 8.500h10M2 11.500h10', 'stroke-dasharray="1 2"') + p('M14.500 1v14', 'stroke-dasharray="3 1"'), grid: p('M.5.5h15v15H.5zM3.500 0v16M6.500 0v16M9.500 0v16M12.500 0v16M0 3.500h16M0 6.500h16M0 9.500h16M0 12.500h16', 'fill="#ddd"'), ortho: p('M1.500 0v15.500H16M1.500 10.500h6v5'),
  polar: p('M10.500 3.500a5 5 0 1 0 2 6M7 9.500h8M7 9.500l6-7M12 6l1 6', 'stroke-width="1.200"'), osnap: p('M3.500 3.500h12v12h-12z', 'fill="#f6f6f6"') + c(3, 3, 2, `fill="#fff" stroke="${O}"`), osnap3d: soft(4.5, 4, 8, 8, 3) + c(3, 13, 2, `fill="#fff" stroke="${O}"`), otrack: p('M13 2L2 13.500h12M8 13.500V11', 'stroke="#000"'),
  ducs: p('M1.500 2v13H15M.5 4l1-3 1 3M12 14l3 1M2 15L9 7') + p('M13 0L9 5h2.500L10 9l5-5h-2z', 'fill="#f6a01a" stroke="#c60" stroke-width=".5"'), dyn: p('M1 7.500h9M5.500 3v9', 'stroke="#000"') + p('M8.500 9.500h6v3h-6z', 'fill="#fff"'), lwt: p('M2 8h12', 'stroke="#000" stroke-width="1.500"') + p('M8 2v11', 'stroke="#000" stroke-width="1.500"'), tpy: p('M.5.5h15v15H.5z', `fill="#cfe6f4" ${SB}`) + p('M2 3h12M2 7h12M2 11h12', 'stroke="#8cbcdc" stroke-width="2" stroke-dasharray="2 2"') + p('M4 5h10M4 9h10M4 13h10', 'stroke="#8cbcdc" stroke-width="2" stroke-dasharray="2 2"'),
  qp: p('M4.500 2.500h8v11h-8z', 'fill="#fff" stroke="#111"') + p('M6 5.500h5M6 8h5M6 10.500h5', 'stroke-width="1.500" stroke-dasharray="1 1 3"'), sc: p('M3.500 0v8M0 3.500h8') + p('M4.500 4.500h6v6h-6z', G) + p('M8.500 8.500h7v7h-7z', 'fill="#8cc46a" stroke="#2c6d17"'), annomon: p('M5.500.5h5v5h5v5h-5v5h-5v-5h-5v-5h5z', 'fill="#f4f4f4"'),
  layoutq: p('M2.500 1.500h11v10h-11zM1 14.500h14', G) + p('M5 4v6h6z'), viewsq: p('M.5 1.500h7v8h-7zM8.500 1.500h7v8h-7z', 'fill="#fff"') + p('M0 13h16', 'stroke-width="2"'),
  anno, annovis: anno + c(13, 8, 2.5, `fill="#ffd93a" stroke="${O}"`), annoauto: `<g opacity=".5">${anno}</g>` + p('M1 2l4 6M11 3l3 5', 'stroke="#888"'),
  hw: p('M1.500 2.500h12v7h-12z', 'fill="#6f7f99"') + p('M3 1v1M6 1v1M9 1v1M12 1v1M3 10v2M6 10v2M9 10v2') + c(12.5, 11, 3, 'fill="#cde6f8" stroke="#3a7fc0"'), cleanscreen: p('M1.500 1.500h13v13h-13z', 'fill="#f4f4f4"') + p('M1.500 3h13', 'stroke-width="3"'),
};

const icon = n => `<svg class="block shrink-0" width="16" height="16" viewBox="0 0 16 16" fill="none" stroke="${K}" aria-hidden="true">${ICONS[n]}</svg>`;
const caret = col => `<svg class="block shrink-0" width="8" height="5" viewBox="0 0 8 5" aria-hidden="true"><path d="M.5 0h7L4 4.500z" fill="${col}"/></svg>`;
const kinds = {
  h: { b: 'flex h-[22px] w-[23px] shrink-0 items-center justify-center', s: 'mx-[2px] h-[18px] w-[2px] shrink-0 self-center border-r border-[#888]', v: 'flex w-[13px] shrink-0 items-center justify-center' },
  q: { b: 'flex h-[22px] w-[24px] shrink-0 items-center justify-center', s: '', v: 'flex w-[12px] shrink-0 items-center justify-center' },
  v: { b: 'flex h-[22px] w-[22px] shrink-0 items-center justify-center', s: 'mx-[3px] my-[2px] h-px bg-[#999]', v: '' },
  s: { b: 'flex h-[21px] w-[22px] shrink-0 items-center justify-center border-l border-[#555] bg-linear-to-b from-[#c0c0c0] to-[#9c9c9c]', s: '', v: '' },
};
const onClass = 'flex h-[21px] w-[22px] shrink-0 items-center justify-center border-l border-[#555] bg-linear-to-b from-[#e0f4fa] to-[#8cc8da]';

document.querySelectorAll('[data-tools]').forEach(el => {
  const k = kinds[el.dataset.kind || 'h'];
  el.innerHTML = el.dataset.tools.split(' ').map(t => {
    if (t === '|') return `<span class="${k.s}"></span>`;
    if (t === 'v') return `<button aria-label="更多" class="${k.v}">${caret(el.dataset.kind ? '#444' : '#999')}</button>`;
    const n = t.replace('*', '');
    return `<button aria-label="${n}" class="${t === n ? k.b : onClass}">${icon(n)}</button>`;
  }).join('');
});
document.querySelectorAll('[data-bar]').forEach(el => el.insertAdjacentHTML('afterbegin',
  '<span class="flex h-full w-[7px] shrink-0 items-center justify-center bg-[#5a5a5a]"><svg width="4" height="16"><path d="M.5 0v16M2.500 0v16" stroke="#111" stroke-dasharray="1 1"/></svg></span>'));
document.querySelectorAll('[data-vbar]').forEach(el => el.insertAdjacentHTML('afterbegin',
  '<span class="flex h-[8px] w-full shrink-0 items-center justify-center bg-[#5a5a5a]"><svg width="14" height="4"><path d="M0 .5h14M0 2.500h14" stroke="#111" stroke-dasharray="1 1"/></svg></span>'));
document.querySelectorAll('[data-select]').forEach(el => el.insertAdjacentHTML('beforeend',
  `<select aria-label="${el.dataset.select || '视图'}" class="h-full min-w-0 flex-1 appearance-none pl-[3px] outline-none"><option>${el.dataset.select}</option></select><span class="px-[2px]">${caret('#aaa')}</span>`));
document.querySelectorAll('[data-icon]').forEach(el => { el.innerHTML = icon(el.dataset.icon); });
document.querySelectorAll('[data-caret]').forEach(el => { el.innerHTML = `<span class="block px-[3px]">${caret({ black: '#000', dark: '#444', gray: '#888' }[el.dataset.caret])}</span>`; });
// Latin runs of the command line use the half-width monospace face
document.querySelectorAll('[data-cmd]').forEach(el => {
  el.innerHTML = el.innerHTML.replace(/(&lt;|&gt;|<[^>]*>)|([ \[\]()\/:A-Z]+)/g, (m, e) =>
    e && e[0] === '<' ? e : `<span class="whitespace-pre font-['Liberation_Mono',monospace] text-[12px] leading-none">${m}</span>`);
});
</script>
</body>
</html>
